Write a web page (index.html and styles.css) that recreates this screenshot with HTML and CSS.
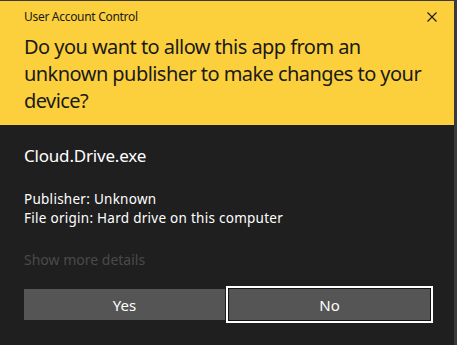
FILE: index.html
```html
<!DOCTYPE html>
<html lang="en">
<head>
<meta charset="utf-8">
<title>User Account Control</title>
<link rel="stylesheet" href="styles.css">
</head>
<body>
<div class="dialog">
  <div class="header">
    <div class="titlebar">
      <span class="title">User Account Control</span>
      <span class="close" aria-label="Close">
        <svg width="10" height="10" viewBox="0 0 10 10"><path d="M0.5 0.5 L9.5 9.5 M9.5 0.5 L0.5 9.5" stroke="#1a1a1a" stroke-width="1.1" fill="none"/></svg>
      </span>
    </div>
    <h1 class="question">Do you want to allow this app from an unknown publisher to make changes to your device?</h1>
  </div>
  <div class="body">
    <div class="app-name">Cloud.Drive.exe</div>
    <div class="details">
      <div>Publisher: Unknown</div>
      <div>File origin: Hard drive on this computer</div>
    </div>
    <div class="more">Show more details</div>
    <div class="buttons">
      <button class="btn">Yes</button>
      <button class="btn focused">No</button>
    </div>
  </div>
</div>
</body>
</html>
```

FILE: styles.css
```css
html, body {
  margin: 0;
  padding: 0;
  background: #1f1f1f;
}
body {
  font-family: "Noto Sans", "Open Sans", sans-serif;
  width: 457px;
  height: 345px;
  overflow: hidden;
}
.dialog {
  box-sizing: border-box;
  width: 457px;
  height: 345px;
  border-top: 1px solid #3a3a3a;
  border-right: 3px solid #3a3a3a;
  background: #1f1f1f;
  display: flex;
  flex-direction: column;
}
.header {
  background: #fcd03c;
  height: 124px;
  box-sizing: border-box;
  padding: 7px 0 0 24px;
  color: #1a1a1a;
}
.titlebar {
  display: flex;
  justify-content: space-between;
  align-items: center;
  height: 18px;
}
.title {
  font-size: 12px;
  line-height: 18px;
  letter-spacing: -0.3px;
}
.close {
  display: flex;
  width: 10px;
  height: 10px;
  margin-right: 17px;
}
.question {
  margin: 7px 0 0 0;
  font-weight: normal;
  font-size: 20px;
  line-height: 27px;
  letter-spacing: -0.55px;
  width: 400px;
}
.body {
  padding: 0 24px 0 24px;
  color: #ffffff;
}
.app-name {
  margin-top: 20px;
  font-size: 17px;
  line-height: 22px;
  letter-spacing: -0.2px;
}
.details {
  margin-top: 23px;
  font-size: 13.5px;
  line-height: 18.5px;
  letter-spacing: 0.27px;
}
.more {
  margin-top: 24px;
  font-size: 14px;
  line-height: 17px;
  color: #4a4a4a;
}
.buttons {
  margin-top: 21px;
  display: flex;
  gap: 4px;
}
.btn {
  width: 201px;
  height: 31px;
  border: none;
  background: #555555;
  color: #ffffff;
  font-family: inherit;
  font-size: 15px;
  padding: 0;
}
.focused {
  box-shadow: 0 0 0 1px #141414, 0 0 0 3px #ffffff;
}
```
